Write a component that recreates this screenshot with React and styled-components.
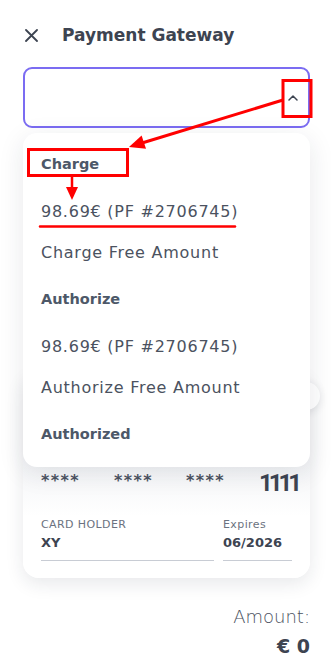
import React from 'react'
import styled, { createGlobalStyle } from 'styled-components'

const Global = createGlobalStyle`
  html, body {
    margin: 0;
    background: #fff;
  }
  body {
    font-family: 'DejaVu Sans', 'Noto Sans', sans-serif;
    color: #4b5260;
  }
`

const Page = styled.div`
  position: relative;
  width: 331px;
  height: 665px;
  overflow: hidden;
  padding: 0 21px 0 23px;
  box-sizing: border-box;
`

const Header = styled.div`
  display: flex;
  align-items: center;
  gap: 24px;
  height: 64px;
  padding: 3px 0 0 2px;
`

const Title = styled.h1`
  margin: 0;
  font-size: 17px;
  font-weight: 600;
  color: #3d4451;
`

const SelectWrap = styled.div`
  position: relative;
  z-index: 2;
`

const SelectBox = styled.div`
  height: 61px;
  box-sizing: border-box;
  border: 2px solid #7b6cf2;
  border-radius: 9px;
  display: flex;
  align-items: center;
  justify-content: flex-end;
  padding-right: 10px;
`

const Menu = styled.div`
  position: absolute;
  top: 66px;
  left: 0;
  right: 0;
  background: #fff;
  border-radius: 14px;
  box-shadow: 0 6px 26px rgba(30, 40, 60, 0.1);
  padding: 5px 0 6px;
`

const GroupLabel = styled.div`
  padding: 17px 18px 18px;
  line-height: 18px;
  font-size: 14.5px;
  font-weight: 600;
  color: #4d5868;
`

const Option = styled.div`
  padding: 10px 18px;
  line-height: 21px;
  font-size: 16px;
  letter-spacing: 0.75px;
  color: #4b5260;
  white-space: nowrap;
`

const Card = styled.div`
  position: relative;
  margin-top: 244px;
  border-radius: 16px;
  background: linear-gradient(180deg, #e8eaee 0%, #f4f5f7 45%, #fff 70%);
  box-shadow: 0 6px 18px rgba(30, 40, 60, 0.1);
  padding: 97px 18px 17px;
`

const RoundButton = styled.div`
  position: absolute;
  top: 10px;
  right: -10px;
  width: 28px;
  height: 28px;
  border-radius: 50%;
  background: #fff;
  box-shadow: 0 2px 8px rgba(30, 40, 60, 0.12);
`

const Digits = styled.div`
  display: grid;
  grid-template-columns: 73px 72px 73px 1fr;
  align-items: center;
  height: 26px;
  color: #4b5260;
`

const Stars = styled.span`
  font-size: 16px;
  font-weight: 700;
  letter-spacing: 1.4px;
  margin-top: -6px;
`

const Last = styled.span`
  justify-self: end;
  font-family: Roboto, 'Liberation Sans', sans-serif;
  font-size: 24px;
  font-weight: 700;
  letter-spacing: -4px;
  margin-right: 4px;
  color: #3d4451;
`

const Fields = styled.div`
  display: grid;
  grid-template-columns: 1fr 69px;
  gap: 9px;
  margin-top: 23px;
`

const Field = styled.div`
  border-bottom: 1px solid #c8ccd4;
  padding-bottom: 7px;
`

const FieldLabel = styled.div`
  font-size: 11px;
  letter-spacing: 0.4px;
  line-height: 14px;
  color: #6b7280;
`

const FieldValue = styled.div`
  font-size: 13px;
  font-weight: 700;
  line-height: 21px;
  color: #3d4451;
`

const Totals = styled.div`
  text-align: right;
  margin-top: 27px;
`

const AmountLabel = styled.div`
  font-size: 18px;
  font-weight: 300;
  line-height: 24px;
  color: #4b5260;
`

const AmountValue = styled.div`
  margin-top: 4px;
  font-size: 19px;
  font-weight: 700;
  line-height: 26px;
  color: #3d4451;
`

const Marks = styled.svg`
  position: absolute;
  left: 0;
  top: 0;
  z-index: 5;
  pointer-events: none;
`

const options = [
  { group: 'Charge', items: ['98.69€ (PF #2706745)', 'Charge Free Amount'] },
  { group: 'Authorize', items: ['98.69€ (PF #2706745)', 'Authorize Free Amount'] },
  { group: 'Authorized', items: [] },
]

export default function App() {
  return (
    <Page>
      <Global />
      <Header>
        <svg width="13" height="13" viewBox="0 0 13 13">
          <path d="M1 1L12 12M12 1L1 12" stroke="#3d4451" strokeWidth="1.8" strokeLinecap="round" />
        </svg>
        <Title>Payment Gateway</Title>
      </Header>
      <SelectWrap>
        <SelectBox>
          <svg width="10" height="6" viewBox="0 0 10 6">
            <path d="M1 5L5 1L9 5" fill="none" stroke="#3d4451" strokeWidth="1.5" strokeLinecap="round" strokeLinejoin="round" />
          </svg>
        </SelectBox>
        <Menu>
          {options.map(o => (
            <div key={o.group}>
              <GroupLabel>{o.group}</GroupLabel>
              {o.items.map(i => (
                <Option key={i}>{i}</Option>
              ))}
            </div>
          ))}
        </Menu>
      </SelectWrap>
      <Card>
        <RoundButton />
        <Digits>
          <Stars>****</Stars>
          <Stars>****</Stars>
          <Stars>****</Stars>
          <Last>1111</Last>
        </Digits>
        <Fields>
          <Field>
            <FieldLabel>CARD HOLDER</FieldLabel>
            <FieldValue>XY</FieldValue>
          </Field>
          <Field>
            <FieldLabel>Expires</FieldLabel>
            <FieldValue>06/2026</FieldValue>
          </Field>
        </Fields>
      </Card>
      <Totals>
        <AmountLabel>Amount:</AmountLabel>
        <AmountValue>€ 0</AmountValue>
      </Totals>
      <Marks width="331" height="665" viewBox="0 0 331 665">
        <rect x="283" y="80.5" width="28" height="36" fill="none" stroke="#f00" strokeWidth="3" />
        <rect x="28.5" y="149.5" width="99" height="26" fill="none" stroke="#f00" strokeWidth="3" />
        <line x1="283" y1="100" x2="142" y2="143" stroke="#f00" strokeWidth="3" />
        <polygon points="129,147 146,148.8 141.6,135.5" fill="#f00" />
        <line x1="72" y1="177" x2="72" y2="189" stroke="#f00" strokeWidth="2.5" />
        <polygon points="66,187 78,187 72,200" fill="#f00" />
        <line x1="40" y1="226.5" x2="235" y2="226.5" stroke="#f00" strokeWidth="2.5" strokeLinecap="round" />
      </Marks>
    </Page>
  )
}
